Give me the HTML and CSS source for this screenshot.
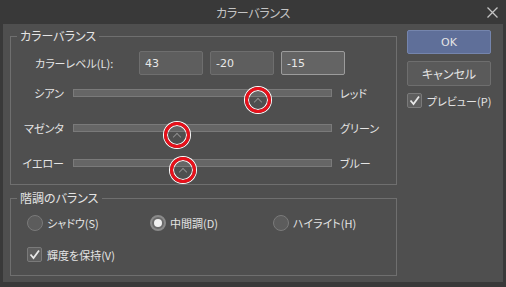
FILE: index.html
```html
<!DOCTYPE html>
<html lang="ja">
<head>
    <meta charset="UTF-8">
    <title>カラーバランス</title>
    <link rel="stylesheet" href="styles.css">
</head>
<body>
    <header class="titlebar">
        <span></span>
        <span class="title">カラーバランス</span>
        <span class="close">
            <svg width="11" height="11" viewBox="0 0 11 11"><path d="M0.5 0.5 L10.5 10.5 M10.5 0.5 L0.5 10.5" stroke="#c4c4c4" stroke-width="1.3" fill="none"/></svg>
        </span>
    </header>

    <div class="dialog">
        <div class="groups">
            <!-- カラーバランス -->
            <fieldset class="group group-balance">
                <legend>カラーバランス</legend>
                <div class="level-row">
                    <span class="level-label">カラーレベル(L):</span>
                    <input class="num" type="text" value="43">
                    <input class="num" type="text" value="-20">
                    <input class="num focus" type="text" value="-15">
                </div>
                <div class="slider-row">
                    <span class="left">シアン</span>
                    <div class="track"><span class="thumb" style="left: 71.5%"></span></div>
                    <span class="right">レッド</span>
                </div>
                <div class="slider-row">
                    <span class="left">マゼンタ</span>
                    <div class="track"><span class="thumb" style="left: 40%"></span></div>
                    <span class="right">グリーン</span>
                </div>
                <div class="slider-row">
                    <span class="left">イエロー</span>
                    <div class="track"><span class="thumb" style="left: 42.5%"></span></div>
                    <span class="right">ブルー</span>
                </div>
            </fieldset>

            <!-- 階調のバランス -->
            <fieldset class="group group-tone">
                <legend>階調のバランス</legend>
                <div class="radio-row">
                    <label class="radio"><span class="dot"></span>シャドウ(S)</label>
                    <label class="radio checked"><span class="dot"></span>中間調(D)</label>
                    <label class="radio"><span class="dot"></span>ハイライト(H)</label>
                </div>
                <label class="check check-keep">
                    <span class="box"><svg width="13" height="13" viewBox="0 0 13 13"><path d="M2.5 6.5 L5.5 10 L11 2.5" stroke="#e8e8e8" stroke-width="1.8" fill="none"/></svg></span>
                    輝度を保持(V)
                </label>
            </fieldset>
        </div>

        <div class="actions">
            <button class="btn btn-ok">OK</button>
            <button class="btn">キャンセル</button>
            <label class="check">
                <span class="box"><svg width="13" height="13" viewBox="0 0 13 13"><path d="M2.5 6.5 L5.5 10 L11 2.5" stroke="#e8e8e8" stroke-width="1.8" fill="none"/></svg></span>
                プレビュー(P)
            </label>
        </div>
    </div>
</body>
</html>
```

FILE: styles.css
```css
/* ウィンドウ全体 */
body {
    margin: 0;
    width: 506px;
    height: 287px;
    background-color: #393939;
    font-family: "Noto Sans CJK JP", "Noto Sans", sans-serif;
    font-size: 11px;
    font-feature-settings: "palt";
    color: #e4e4e4;
    overflow: hidden;
}

.titlebar {
    height: 24px;
    display: grid;
    grid-template-columns: 1fr auto 1fr;
    align-items: center;
}

.title {
    font-size: 12px;
    color: #c4c4c4;
    letter-spacing: -0.3px;
}

.close {
    justify-self: end;
    padding-right: 8px;
    display: flex;
}

/* ダイアログ本体 */
.dialog {
    margin: 0 3px;
    height: 258px;
    padding: 4px 0 0 7px;
    box-sizing: border-box;
    background-color: #4f4f4f;
    display: flex;
    gap: 10px;
}

.groups {
    width: 387px;
}

.group {
    margin: 0;
    padding: 0;
    border: 1px solid #6f6f6f;
    min-width: 0;
}

.group legend {
    margin-left: 6px;
    padding: 0 3px;
    line-height: 16px;
    font-size: 12px;
}

.group-balance {
    padding-bottom: 11px;
}

.group-tone {
    margin-top: 5px;
    padding-bottom: 13px;
}

/* カラーレベル */
.level-row {
    margin-top: 7px;
    display: flex;
    align-items: center;
    height: 24px;
}

.level-label {
    width: 104px;
    padding-left: 24px;
}

.num {
    width: 64px;
    height: 24px;
    box-sizing: border-box;
    margin: 0 7px 0 0;
    padding: 0 5px;
    background-color: #5e5e5e;
    border: 1px solid #6e6e6e;
    border-radius: 2px;
    color: #e8e8e8;
    font-family: "DejaVu Sans", sans-serif;
    font-size: 11px;
    outline: none;
}

.num.focus {
    background-color: #646464;
    border-color: #9c9c9c;
}

/* スライダー */
.slider-row {
    display: grid;
    grid-template-columns: 62px 259px auto;
    align-items: center;
    height: 20px;
    margin-top: 15px;
}

.slider-row:nth-of-type(2) {
    margin-top: 8px;
}

.slider-row .left {
    text-align: right;
    padding-right: 9px;
}

.slider-row .right {
    padding-left: 8px;
}

.track {
    position: relative;
    height: 8px;
    background-color: #666666;
    border: 1px solid #7a7a7a;
    box-sizing: border-box;
}

.thumb {
    position: absolute;
    top: -3px;
    width: 20px;
    height: 20px;
    margin-left: -13px;
    border: 3px solid #e8101a;
    border-radius: 50%;
    box-shadow: 0 0 0 1px #ffffff, inset 0 0 0 1px #ffffff;
}

.thumb::after {
    content: "";
    position: absolute;
    left: 7px;
    top: 9px;
    width: 5px;
    height: 5px;
    border-left: 1px solid #8c8c8c;
    border-top: 1px solid #8c8c8c;
    transform: rotate(45deg);
}

/* ラジオボタン */
.radio-row {
    margin-top: 9px;
    padding-left: 16px;
    display: flex;
    height: 16px;
}

.radio {
    width: 125px;
    display: flex;
    align-items: center;
    gap: 4px;
}

.dot {
    width: 16px;
    height: 16px;
    box-sizing: border-box;
    border: 1px solid #7a7a7a;
    border-radius: 50%;
    background-color: #5c5c5c;
    display: flex;
    align-items: center;
    justify-content: center;
}

.radio.checked .dot {
    border: 2px solid #8a8a8a;
    background-color: #6a6a6a;
}

.radio.checked .dot::after {
    content: "";
    width: 8px;
    height: 8px;
    border-radius: 50%;
    background-color: #f0f0f0;
}

/* チェックボックス */
.check {
    display: flex;
    align-items: center;
    gap: 5px;
    height: 15px;
    white-space: nowrap;
}

.check-keep {
    margin-top: 16px;
    padding-left: 16px;
}

.box {
    flex: none;
    width: 15px;
    height: 15px;
    box-sizing: border-box;
    border: 1px solid #7a7a7a;
    border-radius: 2px;
    background-color: #5e5e5e;
    display: flex;
    align-items: center;
    justify-content: center;
}

/* ボタン */
.actions {
    width: 84px;
    display: flex;
    flex-direction: column;
}

.btn {
    height: 25px;
    margin-bottom: 7px;
    padding: 0;
    border: 1px solid #6e6e6e;
    border-radius: 2px;
    background-color: #5a5a5a;
    color: #e4e4e4;
    font-family: inherit;
    font-size: 12px;
    font-feature-settings: "palt";
}

.btn-ok {
    height: 24px;
    margin-top: 2px;
    background-color: #5f6f99;
    border-color: #7585ad;
    font-family: "DejaVu Sans", sans-serif;
    font-size: 11px;
}
```
